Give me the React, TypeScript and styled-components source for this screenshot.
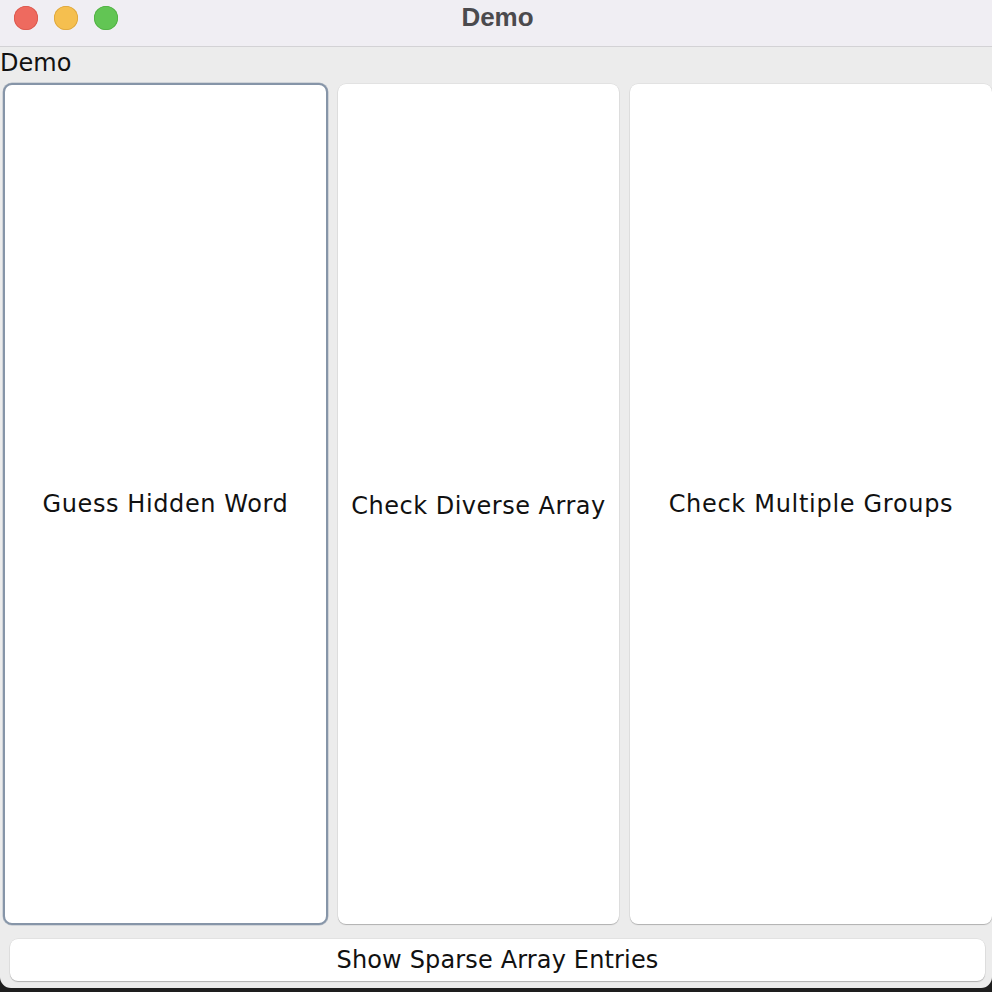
import React from "react";
import styled, { createGlobalStyle } from "styled-components";

const Global = createGlobalStyle`
  html, body {
    margin: 0;
    padding: 0;
    background: #1e1e1e;
    width: 992px;
    height: 992px;
    overflow: hidden;
  }
  * { box-sizing: border-box; }
`;

const Window = styled.div`
  width: 992px;
  height: 988px;
  background: #ececec;
  border-radius: 0 0 11px 11px;
  overflow: hidden;
  display: flex;
  flex-direction: column;
`;

const TitleBar = styled.div`
  height: 47px;
  flex: none;
  background: #f0eef3;
  border-bottom: 1px solid #d3d2d5;
  display: flex;
  align-items: center;
  position: relative;
`;

const Lights = styled.div`
  display: flex;
  gap: 16px;
  padding-left: 14px;
  margin-top: -11px;
`;

const Light = styled.span<{ $c: string; $b: string }>`
  width: 24px;
  height: 24px;
  border-radius: 50%;
  background: ${(p) => p.$c};
  box-shadow: inset 0 0 0 0.8px ${(p) => p.$b};
`;

const Title = styled.div`
  position: absolute;
  left: 0;
  right: 0;
  top: 3px;
  text-align: center;
  font-family: "Liberation Sans", Arial, sans-serif;
  font-weight: 700;
  font-size: 26px;
  line-height: 28px;
  color: #4b4a4d;
  padding-left: 3px;
`;

const Label = styled.div`
  height: 36px;
  flex: none;
  font-family: "DejaVu Sans", sans-serif;
  font-size: 24px;
  line-height: 32px;
  color: #111;
`;

const Row = styled.div`
  display: flex;
  height: 842px;
  flex: none;
  padding-left: 3px;
  gap: 10px;
`;

const Button = styled.button<{
  $w: number;
  $focus?: boolean;
  $dy?: number;
  $ls?: number;
  $ml?: number;
}>`
  width: ${(p) => p.$w}px;
  flex: none;
  margin: ${(p) => (p.$focus ? "0" : "1px 0")};
  margin-left: ${(p) => p.$ml ?? 0}px;
  background: #fff;
  border: ${(p) => (p.$focus ? "2px solid #8695a8" : "none")};
  border-radius: ${(p) => (p.$focus ? "9px" : "8px")};
  box-shadow: ${(p) =>
    p.$focus
      ? "0 0 0 0.5px rgba(120,135,155,0.5)"
      : "0 1px 1px rgba(0,0,0,0.22), 0 0 0 0.5px rgba(0,0,0,0.08)"};
  font-family: "DejaVu Sans", sans-serif;
  font-size: 24px;
  letter-spacing: ${(p) => p.$ls ?? 0.3}px;
  color: #111;
  display: flex;
  align-items: center;
  justify-content: center;
  padding: ${(p) => p.$dy ?? 0}px 0 0 0;
`;

const BottomWrap = styled.div`
  padding: 14px 7px 0 10px;
`;

const WideButton = styled.button`
  width: 975px;
  height: 42px;
  background: #fff;
  border: none;
  border-radius: 8px;
  box-shadow: 0 1px 1px rgba(0,0,0,0.22), 0 0 0 0.5px rgba(0,0,0,0.08);
  font-family: "DejaVu Sans", sans-serif;
  font-size: 24px;
  letter-spacing: 0.15px;
  color: #111;
  padding: 0;
`;

export default function App() {
  return (
    <>
      <Global />
      <Window>
        <TitleBar>
          <Lights>
            <Light $c="#ee6a5f" $b="#d9564b" />
            <Light $c="#f5bf4f" $b="#dba43a" />
            <Light $c="#62c554" $b="#4fae41" />
          </Lights>
          <Title>Demo</Title>
        </TitleBar>
        <Label>Demo</Label>
        <Row>
          <Button $w={325} $focus $ls={0.6}>Guess Hidden Word</Button>
          <Button $w={281} $dy={4} $ls={0.5}>Check Diverse Array</Button>
          <Button $w={362} $ml={1} $ls={0.7}>Check Multiple Groups</Button>
        </Row>
        <BottomWrap>
          <WideButton>Show Sparse Array Entries</WideButton>
        </BottomWrap>
      </Window>
    </>
  );
}
